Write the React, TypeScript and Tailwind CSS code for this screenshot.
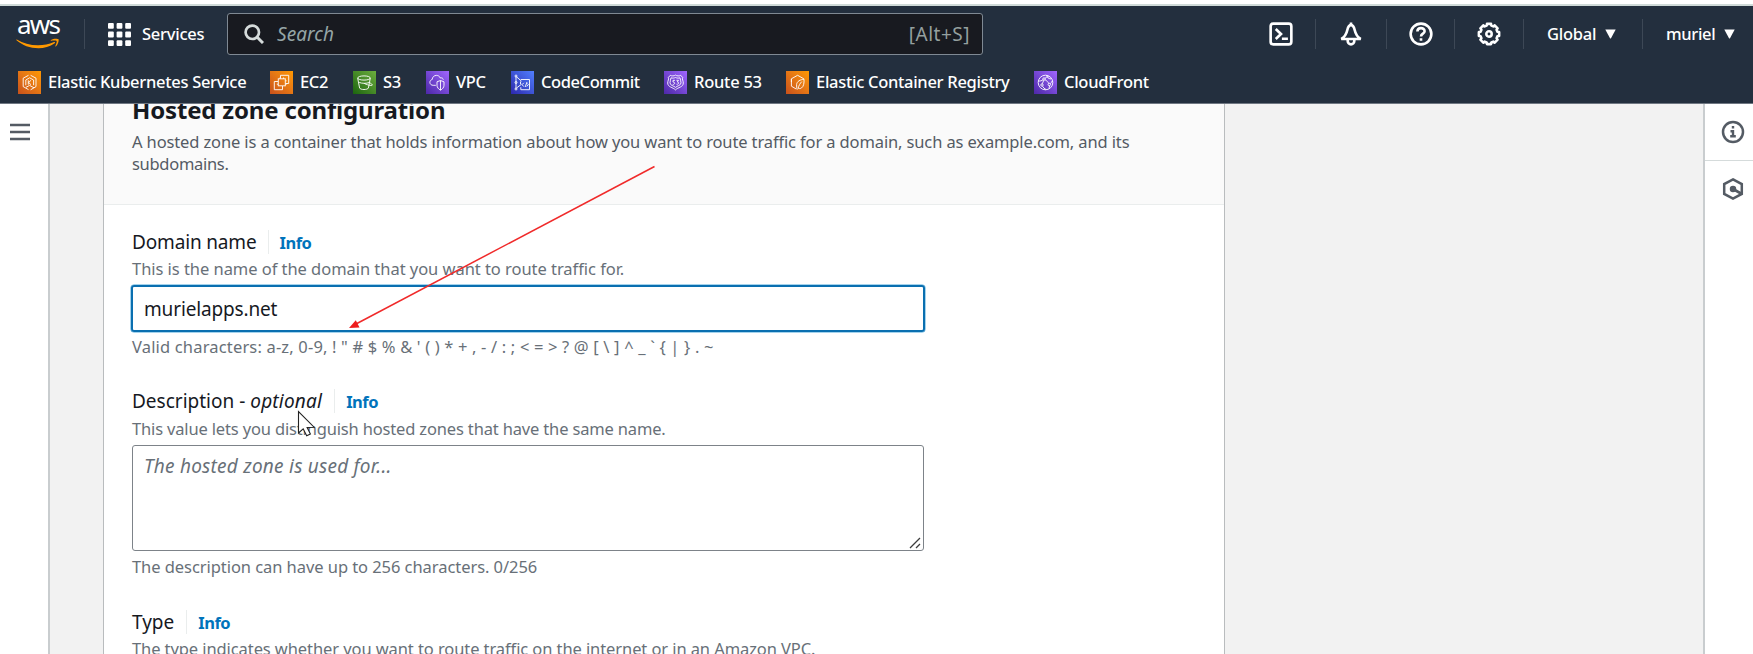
import type { ReactNode } from "react";

const glyph = "h-[23px] w-[23px] shrink-0";

type Fav = { name: string; box: string; text: string; bg: string; art: ReactNode };

const favourites: Fav[] = [
  {
    name: "Elastic Kubernetes Service",
    box: "w-[228px]",
    text: "tracking-[-0.29px]",
    bg: "bg-linear-to-tr from-[#c8511b] to-[#ff9900]",
    art: (
      <>
        <path d="M10.5 4.3 5.2 7.2v8.4l5.3 3M12.6 4.3 18 7.2v8.4l-2 1.2M12.6 18.8l3.4-2-4.4-2.4-3.6 1.9" />
        <path d="M11.6 6.8 7.8 9v5.3M11.6 6.8 15.6 9v5.2" />
        <path d="M10.3 9.3v4.4M13 9.3l-2.4 2.2 2.4 2.2" />
      </>
    ),
  },
  {
    name: "EC2",
    box: "w-[59px]",
    text: "tracking-[-0.35px]",
    bg: "bg-linear-to-tr from-[#c8511b] to-[#ff9900]",
    art: (
      <>
        <rect x="8.3" y="7.8" width="7" height="7" />
        <path d="M10.5 7.5V4.3h8.2v8.2h-3.2M8 10.5H4.3v8.2h8.2V15M10 6.5v1.3M13.5 6.5v1.3M15.3 9.8h1.3M15.3 13.2h1.3M6.8 13.2h1.4" />
      </>
    ),
  },
  {
    name: "S3",
    box: "w-[49px]",
    text: "tracking-[-0.35px]",
    bg: "bg-linear-to-tr from-[#1b660f] to-[#6cae3e]",
    art: (
      <>
        <ellipse cx="11" cy="7" rx="6.3" ry="2.1" />
        <path d="M4.7 7.2 6.6 17c.8 2 8 2 8.8 0l1.9-9.8M11 12.2c2 1.4 7.6 2.9 8.2 2 .3-.8-1-1.7-2.6-2.5M6.2 11.4c2.5 1.2 7.5 1.2 10 .1" />
      </>
    ),
  },
  {
    name: "VPC",
    box: "w-[61px]",
    text: "tracking-[-0.35px]",
    bg: "bg-linear-to-tr from-[#4d27a8] to-[#a166ff]",
    art: (
      <>
        <path d="M9.8 14.3H7.2c-2 0-3.3-1.3-3.3-2.9 0-1.5 1-2.6 2.3-2.9.1-2.4 1.9-4.1 4.2-4.1 1.9 0 3.3 1 3.9 2.6 1.6-.5 2.8.3 3 1.7" />
        <path d="M14.5 9.5 11 10.8v3.5c0 2.2 1.6 3.8 3.5 4.9 1.9-1.1 3.5-2.7 3.5-4.9v-3.5zM14.5 9.5v9.5" />
      </>
    ),
  },
  {
    name: "CodeCommit",
    box: "w-[129px]",
    text: "tracking-[-0.42px]",
    bg: "bg-linear-to-tr from-[#2e27ad] to-[#527fff]",
    art: (
      <>
        <path d="M5 5.5v12M5.5 5.8l5 4.400M5.5 17l5-3.800M9.800 8.500h8.700v10.200H9.800v-2.500" />
        <circle cx="5" cy="5" r="1" />
        <circle cx="5" cy="11.5" r="1" />
        <circle cx="5" cy="18" r="1" />
        <path d="m12.8 11.8-1.700 1.900 1.700 1.900M16 11l-1.800 5M16.500 12.500l.8 1-1.500 2M9.500 10.500v2.500" />
      </>
    ),
  },
  {
    name: "Route 53",
    box: "w-[98px]",
    text: "tracking-[-0.25px]",
    bg: "bg-linear-to-tr from-[#4d27a8] to-[#a166ff]",
    art: (
      <>
        <path d="M6.300 4.300c1.500.9 3.700.8 5.200-.2 1.500 1 3.700 1.100 5.200.2l2 2.200c-.9 1.700.6 3.200.6 5.500 0 4.300-5.300 4.200-7.800 6.900-2.500-2.700-7.800-2.600-7.800-6.900 0-2.300 1.500-3.800.6-5.500z" />
        <path d="M7 6.800c1.500.5 3 .4 4.500-.3 1.500.7 3 .8 4.500.3.200 1.800 1 3 1 5 0 2.800-3.800 2.900-5.500 4.600-1.700-1.700-5.500-1.800-5.500-4.600 0-2 .8-3.200 1-5z" />
        <path d="M11 9.300H9v1.800c2.200-.3 2.300 2.900-.3 2.200M12.500 9.300h2l-1.200 1.600c2 0 1.800 2.800-.8 2.300" />
      </>
    ),
  },
  {
    name: "Elastic Container Registry",
    box: "w-[224px]",
    text: "tracking-[-0.29px]",
    bg: "bg-linear-to-tr from-[#c8511b] to-[#ff9900]",
    art: (
      <>
        <path d="M17.800 8V7.800l-6.200-3.500-6.200 3.500v7.400l4.600 2.700M5.400 11V7.800" />
        <path d="M18 8.200c-3.800.5-7 2-7.400 5.200-.2 1.600.2 3.800.6 5.300M18 8.200c.2 3.600-.1 7.200-2.700 8.900-1 .6-2.300.6-3.300.1M15.800 10.600c-1.800 1.800-3 4-3.600 6.500" />
      </>
    ),
  },
  {
    name: "CloudFront",
    box: "w-[116px]",
    text: "tracking-[-0.28px]",
    bg: "bg-linear-to-tr from-[#4d27a8] to-[#a166ff]",
    art: (
      <>
        <circle cx="11.5" cy="11.5" r="7.3" />
        <circle cx="10" cy="8" r="1.2" />
        <circle cx="15.3" cy="13.5" r="1.2" />
        <circle cx="8" cy="14" r="1.2" />
        <path d="M4.600 10c1.500.2 3.200-.2 4.400-1.300M11 8.700c1.800 1 3.100 2.300 3.800 3.800M9.800 9.200 8.300 12.800M8.500 15.200c.8 1.500 2 2.500 3.500 3.300M15.600 14.600c0 1-.3 2-.8 2.900M11 7.300c1-.9 2.300-1.400 3.500-1.800M16.300 12.700c.8-.8 1.500-1.700 1.900-2.700M12.500 4.500c1 2 1.500 3 4.500 3.500" />
      </>
    ),
  },
];

function FavIcon({ bg, children }: { bg: string; children: ReactNode }) {
  return (
    <span className={`${glyph} ${bg}`}>
      <svg viewBox="0 0 23 23" className={glyph} fill="none" stroke="#fff" strokeWidth="1" strokeOpacity="0.9">
        {children}
      </svg>
    </span>
  );
}

function Sep() {
  return <span className="block h-[30px] w-px shrink-0 bg-[#3d4856]" />;
}

function Caret({ className }: { className: string }) {
  return (
    <svg viewBox="0 0 11 10" className={`h-[10px] w-[11px] shrink-0 ${className}`} fill="#fff">
      <path d="M.3.5h10.400L6 9.200q-.5.600-1 0z" />
    </svg>
  );
}

function IconSlot({ box, children }: { box: string; children: ReactNode }) {
  return (
    <span className={`flex shrink-0 items-center justify-center ${box}`}>
      <svg viewBox="0 0 16 16" className="h-[24px] w-[24px]" fill="none" stroke="#fff" strokeWidth="1.75">
        {children}
      </svg>
    </span>
  );
}

function gearPath() {
  const pts: string[] = [];
  const teeth = 8;
  for (let i = 0; i < teeth; i++) {
    const a = (i / teeth) * Math.PI * 2 - Math.PI / 2;
    const step = [
      [-0.2, 6.9],
      [0.2, 6.9],
      [0.27, 5.8],
      [0.515, 5.8],
    ];
    for (const [d, r] of step) {
      pts.push(`${(8 + r * Math.cos(a + d)).toFixed(2)} ${(8 + r * Math.sin(a + d)).toFixed(2)}`);
    }
  }
  return "M" + pts.join("L") + "Z";
}

function Label({ children, sep }: { children: ReactNode; sep: string }) {
  return (
    <div className="flex h-7 items-center">
      <span className="whitespace-pre text-[19px] leading-7 text-[#16191f]">{children}</span>
      <span className={`h-6 w-px bg-[#eaeded] ${sep}`} />
      <span className="mt-[2px] ml-[11px] text-[16.5px] leading-6 font-bold tracking-[-0.5px] text-[#0073bb]">Info</span>
    </div>
  );
}

const hint = "whitespace-nowrap text-[16.5px] leading-6 text-[#687078]";

export default function App() {
  return (
    <div className="relative flex h-[654px] w-[1753px] flex-col overflow-hidden bg-white font-['Noto_Sans',sans-serif]">
      <div className="h-[6px] shrink-0 border-b-2 border-[#cfdad8] bg-white" />

      <header className="flex h-[98px] shrink-0 flex-col border-b border-[#6f7782] bg-[#232f3e] text-white">
        <div className="flex h-[56px] shrink-0 items-center">
          <div className="-mt-[7px] ml-[16px] flex w-[46px] shrink-0 flex-col">
            <span className="-mt-[3px] pl-[1px] text-[26px] leading-[28px] tracking-[-1.8px]">aws</span>
            <svg viewBox="0 0 46 11" className="h-[11px] w-[46px]" fill="#ff9900">
              <path d="M.8 1.500C7 5.300 14 7.300 22 7.300c5.500 0 11-1.100 16-3.300.9-.3 1.500.6.700 1.200C34 8.600 28 10.200 22.500 10.200 14 10.200 6.300 7.200.500 2.200c-.4-.4-.1-.9.300-.7z" />
              <path d="M40.600 3c-.6-.8-4-.5-5.500-.3-.5.100-.5-.4-.1-.7 2.700-1.800 7-1.300 7.500-.7.500.6-.1 5-2.600 7.100-.4.300-.8.200-.6-.300.6-1.400 1.900-4.400 1.300-5.100z" />
            </svg>
          </div>
          <span className="ml-[22px]">
            <Sep />
          </span>
          <svg viewBox="0 0 23 23" className="ml-[23px] h-[23px] w-[23px] shrink-0" fill="#fff">
            {[0, 8.6, 17.2].map((y) =>
              [0, 8.6, 17.2].map((x) => <rect key={`${x}-${y}`} x={x} y={y} width="5.8" height="5.8" rx="1" />),
            )}
          </svg>
          <span className="ml-[11px] w-[85px] text-[16.5px] leading-6 font-medium tracking-[-0.25px]">Services</span>
          <div className="flex h-[42px] w-[756px] shrink-0 items-center rounded-[3px] border border-[#7f8993] bg-[#181a20] pr-[12px] pl-[16px]">
            <svg viewBox="0 0 20 20" className="h-5 w-5" fill="none" stroke="#d5dbdb">
              <circle cx="8.3" cy="8.3" r="6.7" strokeWidth="2.7" />
              <path d="m13 13 6 6" strokeWidth="3" />
            </svg>
            <span className="ml-[13px] text-[19px] leading-6 tracking-[0.05px] text-[#95a5a6] italic">Search</span>
            <span className="ml-auto text-[19px] leading-6 tracking-[0.5px] text-[#95a09f]">[Alt+S]</span>
          </div>
          <div className="ml-auto flex items-center">
            <IconSlot box="w-[68px]">
              <rect x="1.1" y="1.1" width="13.8" height="13.8" rx="1.8" />
              <path d="m4.500 4.700 3.500 3.300-3.500 3.300M8.600 11.200h4" />
            </IconSlot>
            <Sep />
            <IconSlot box="w-[70px]">
              <path d="M1.500 11.300h13c-2.400-1.200-3.500-3.400-4.100-6.100C10 3.200 9.300 2.100 8 2.100s-2 1.100-2.400 3.100c-.6 2.700-1.700 4.900-4.100 6.100zM8 .400v2M5.800 11.500v1.200a2.200 2.200 0 0 0 4.400 0v-1.200" />
            </IconSlot>
            <Sep />
            <IconSlot box="w-[67px]">
              <circle cx="8" cy="8" r="6.9" />
              <path d="M5.600 6.300c0-3 4.800-2.900 4.800-.2 0 1.700-2.400 1.600-2.400 3.500M8 10.800v1.700" />
            </IconSlot>
            <Sep />
            <IconSlot box="w-[68px]">
              <path d={gearPath()} strokeLinejoin="round" strokeWidth="1.7" />
              <circle cx="8" cy="8" r="1.8" strokeWidth="1.7" />
            </IconSlot>
            <Sep />
            <span className="ml-[23px] w-[50px] text-[16.5px] leading-6 font-medium tracking-[-0.25px]">Global</span>
            <Caret className="ml-[8px]" />
            <span className="ml-[26px]">
              <Sep />
            </span>
            <span className="ml-[23px] w-[50px] text-[16.5px] leading-6 font-medium tracking-[-0.33px]">muriel</span>
            <Caret className="mr-[18px] ml-[8px]" />
          </div>
        </div>
        <nav className="ml-[18px] flex h-[41px] items-center gap-6">
          {favourites.map((f) => (
            <span key={f.name} className={`flex shrink-0 items-center gap-[7px] ${f.box}`}>
              <FavIcon bg={f.bg}>{f.art}</FavIcon>
              <span className={`pb-[2px] text-[16.5px] leading-[21px] font-medium whitespace-nowrap ${f.text}`}>{f.name}</span>
            </span>
          ))}
        </nav>
      </header>

      <div className="flex h-[550px] shrink-0">
        <aside className="w-[50px] shrink-0 border-r-2 border-[#c9cdcf] bg-white pt-[19px] pl-[10px]">
          <svg viewBox="0 0 20 18" className="h-[18px] w-5" stroke="#545b64" strokeWidth="2.6">
            <path d="M0 2h20M0 9h20M0 16h20" />
          </svg>
        </aside>

        <main className="flex min-w-0 flex-1 bg-[#f2f2f2] pl-[53px]">
          <section className="w-[1122px] shrink-0 overflow-hidden border-x border-[#b9bcbe] bg-white">
            <div className="h-[101px] overflow-hidden border-b border-[#eaeded] bg-[#fafafa] pl-[28px]">
              <h2 className="-mt-[9px] text-[24px] leading-[30px] font-bold tracking-[-0.17px] text-[#16191f]">Hosted zone configuration</h2>
              <p className="mt-[6px] text-[16.5px] leading-[22px] tracking-[-0.13px] text-[#545b64]">
                <span className="block whitespace-nowrap">
                  A hosted zone is a container that holds information about how you want to route traffic for a domain, such as example.com, and its
                </span>
                <span className="block tracking-[-0.3px]">subdomains.</span>
              </p>
            </div>

            <div className="flex flex-col pt-[23px] pl-[28px]">
              <Label sep="ml-[11px]">
                <span className="tracking-[-0.16px]">Domain name</span>
              </Label>
              <p className={`${hint} mt-[1px] tracking-[-0.045px]`}>This is the name of the domain that you want to route traffic for.</p>
              <div className="mt-[4px] -ml-[1px] flex h-[47px] w-[794px] items-center rounded-[3px] border-2 border-[#0a6fb0] pl-[11px] shadow-[0_0_0_0.5px_#4aa8dc]">
                <span className="text-[19px] leading-7 tracking-[-0.15px] text-[#16191f]">murielapps.net</span>
              </div>
              <p className={`${hint} mt-[3px] tracking-[0.165px]`}>
                {"Valid characters: a-z, 0-9, ! \" # $ % & ' ( ) * + , - / : ; < = > ? @ [ \\ ] ^ _ ` { | } . ~"}
              </p>

              <div className="mt-[28px]">
                <Label sep="ml-[12px]">
                  Description - <i className="tracking-[0.2px]">optional</i>
                </Label>
              </div>
              <p className={`${hint} mt-[2px] tracking-[-0.16px]`}>This value lets you distinguish hosted zones that have the same name.</p>
              <div className="mt-[4px] flex h-[106px] w-[792px] items-end justify-between rounded-[3px] border border-[#7d8389] pl-[11px]">
                <span className="self-start pt-[6px] text-[19px] leading-7 tracking-[0.24px] text-[#687078] italic">The hosted zone is used for...</span>
                <svg viewBox="0 0 14 14" className="h-[14px] w-[14px]" stroke="#3c3c3c" strokeWidth="1.3">
                  <path d="M1 12 11 2M7 12l4-4" />
                </svg>
              </div>
              <p className={`${hint} mt-[4px] tracking-[-0.06px]`}>The description can have up to 256 characters. 0/256</p>

              <div className="mt-[29px]">
                <Label sep="ml-[12px]">Type</Label>
              </div>
              <p className={`${hint} mt-[1px] tracking-[-0.09px]`}>The type indicates whether you want to route traffic on the internet or in an Amazon VPC.</p>
            </div>
          </section>
        </main>

        <aside className="flex w-[50px] shrink-0 flex-col border-l-2 border-[#c9cdcf] bg-white">
          <div className="flex h-[57px] items-center justify-center border-b border-[#d5dbdb] pl-[7px]">
            <svg viewBox="0 0 24 24" className="h-6 w-6" fill="none" stroke="#545b64" strokeWidth="2.5">
              <circle cx="12" cy="12" r="10" />
              <path d="M12 6v2.600M9.500 11.300H12v5M9.200 16.200h5.600" strokeWidth="2.400" />
            </svg>
          </div>
          <div className="flex h-[56px] items-center justify-center pl-[7px]">
            <svg viewBox="0 0 24 24" className="h-6 w-6" fill="none" stroke="#545b64" strokeWidth="2.5">
              <path d="m12 2.300 8.800 4.800v9.800L12 21.700l-8.800-4.800V7.100z" />
              <circle cx="12" cy="12" r="2" fill="#545b64" />
              <path d="m12 12 8 4.500" strokeWidth="2.6" />
            </svg>
          </div>
        </aside>
      </div>

      <svg viewBox="0 0 310 166" className="pointer-events-none absolute top-[164px] left-[346px] h-[166px] w-[310px]">
        <path d="M308.500 2.500 10 160" stroke="#f02a2a" strokeWidth="1.5" />
        <path d="m3 164 6.800-7.700 3.700 7.200z" fill="#ee1c1c" />
      </svg>
      <svg viewBox="0 0 19 27" className="pointer-events-none absolute top-[410px] left-[297px] h-[27px] w-[19px]">
        <path d="M1.500 1.500v21.500l4.700-4.200 3.500 7 3.700-1.700-3.300-6.600 7-.300z" fill="#fff" stroke="#222" strokeWidth="1.1" />
      </svg>
    </div>
  );
}
